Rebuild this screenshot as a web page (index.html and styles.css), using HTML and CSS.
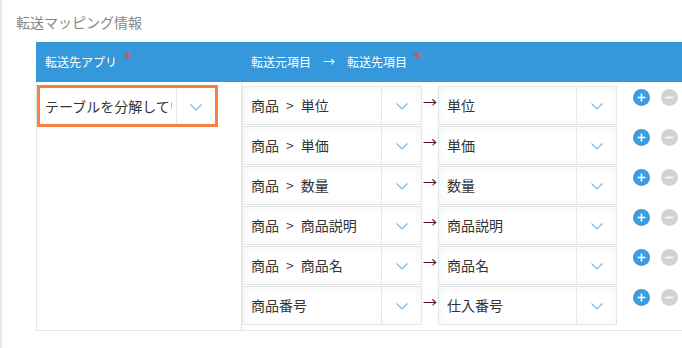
FILE: index.html
```html
<!DOCTYPE html>
<html lang="ja">
<head>
    <meta charset="UTF-8">
    <title>転送マッピング情報</title>
    <link rel="stylesheet" href="styles.css">
</head>
<body>
    <div class="page">
        <div class="title">転送マッピング情報</div>
        <div class="mapping">
            <div class="mapping-head">
                <div class="head-app">転送先アプリ<span class="req">*</span></div>
                <div class="head-fields">転送元項目<span class="head-arrow">→</span>転送先項目<span class="req">*</span></div>
            </div>
            <div class="mapping-body">
                <div class="app-cell">
                    <div class="select focused">
                        <div class="select-text">テーブルを分解してい</div>
                        <div class="select-toggle"><svg width="12" height="7" viewBox="0 0 12 7"><polyline points="0.5,0.5 6,6 11.5,0.5" fill="none" stroke="#7db6e0" stroke-width="1.2"/></svg></div>
                    </div>
                </div>
                <div class="fields-cell">
                    <div class="field-row">
                        <div class="select src"><div class="select-text">商品&ensp;&gt;&ensp;単位</div><div class="select-toggle"><svg width="12" height="7" viewBox="0 0 12 7"><polyline points="0.5,0.5 6,6 11.5,0.5" fill="none" stroke="#7db6e0" stroke-width="1.2"/></svg></div></div>
                        <div class="arrow">→</div>
                        <div class="select dst"><div class="select-text">単位</div><div class="select-toggle"><svg width="12" height="7" viewBox="0 0 12 7"><polyline points="0.5,0.5 6,6 11.5,0.5" fill="none" stroke="#7db6e0" stroke-width="1.2"/></svg></div></div>
                        <div class="btns"><svg class="btn" width="17" height="17" viewBox="0 0 17 17"><circle cx="8.5" cy="8.5" r="8.5" fill="#3d9ce0"/><path d="M4.5 8.5h8M8.5 4.5v8" stroke="#fff" stroke-width="1.6"/></svg><svg class="btn" width="17" height="17" viewBox="0 0 17 17"><circle cx="8.5" cy="8.5" r="8.5" fill="#d2d2d2"/><path d="M4.5 8.5h8" stroke="#fff" stroke-width="1.6"/></svg></div>
                    </div>
                    <div class="field-row">
                        <div class="select src"><div class="select-text">商品&ensp;&gt;&ensp;単価</div><div class="select-toggle"><svg width="12" height="7" viewBox="0 0 12 7"><polyline points="0.5,0.5 6,6 11.5,0.5" fill="none" stroke="#7db6e0" stroke-width="1.2"/></svg></div></div>
                        <div class="arrow">→</div>
                        <div class="select dst"><div class="select-text">単価</div><div class="select-toggle"><svg width="12" height="7" viewBox="0 0 12 7"><polyline points="0.5,0.5 6,6 11.5,0.5" fill="none" stroke="#7db6e0" stroke-width="1.2"/></svg></div></div>
                        <div class="btns"><svg class="btn" width="17" height="17" viewBox="0 0 17 17"><circle cx="8.5" cy="8.5" r="8.5" fill="#3d9ce0"/><path d="M4.5 8.5h8M8.5 4.5v8" stroke="#fff" stroke-width="1.6"/></svg><svg class="btn" width="17" height="17" viewBox="0 0 17 17"><circle cx="8.5" cy="8.5" r="8.5" fill="#d2d2d2"/><path d="M4.5 8.5h8" stroke="#fff" stroke-width="1.6"/></svg></div>
                    </div>
                    <div class="field-row">
                        <div class="select src"><div class="select-text">商品&ensp;&gt;&ensp;数量</div><div class="select-toggle"><svg width="12" height="7" viewBox="0 0 12 7"><polyline points="0.5,0.5 6,6 11.5,0.5" fill="none" stroke="#7db6e0" stroke-width="1.2"/></svg></div></div>
                        <div class="arrow">→</div>
                        <div class="select dst"><div class="select-text">数量</div><div class="select-toggle"><svg width="12" height="7" viewBox="0 0 12 7"><polyline points="0.5,0.5 6,6 11.5,0.5" fill="none" stroke="#7db6e0" stroke-width="1.2"/></svg></div></div>
                        <div class="btns"><svg class="btn" width="17" height="17" viewBox="0 0 17 17"><circle cx="8.5" cy="8.5" r="8.5" fill="#3d9ce0"/><path d="M4.5 8.5h8M8.5 4.5v8" stroke="#fff" stroke-width="1.6"/></svg><svg class="btn" width="17" height="17" viewBox="0 0 17 17"><circle cx="8.5" cy="8.5" r="8.5" fill="#d2d2d2"/><path d="M4.5 8.5h8" stroke="#fff" stroke-width="1.6"/></svg></div>
                    </div>
                    <div class="field-row">
                        <div class="select src"><div class="select-text">商品&ensp;&gt;&ensp;商品説明</div><div class="select-toggle"><svg width="12" height="7" viewBox="0 0 12 7"><polyline points="0.5,0.5 6,6 11.5,0.5" fill="none" stroke="#7db6e0" stroke-width="1.2"/></svg></div></div>
                        <div class="arrow">→</div>
                        <div class="select dst"><div class="select-text">商品説明</div><div class="select-toggle"><svg width="12" height="7" viewBox="0 0 12 7"><polyline points="0.5,0.5 6,6 11.5,0.5" fill="none" stroke="#7db6e0" stroke-width="1.2"/></svg></div></div>
                        <div class="btns"><svg class="btn" width="17" height="17" viewBox="0 0 17 17"><circle cx="8.5" cy="8.5" r="8.5" fill="#3d9ce0"/><path d="M4.5 8.5h8M8.5 4.5v8" stroke="#fff" stroke-width="1.6"/></svg><svg class="btn" width="17" height="17" viewBox="0 0 17 17"><circle cx="8.5" cy="8.5" r="8.5" fill="#d2d2d2"/><path d="M4.5 8.5h8" stroke="#fff" stroke-width="1.6"/></svg></div>
                    </div>
                    <div class="field-row">
                        <div class="select src"><div class="select-text">商品&ensp;&gt;&ensp;商品名</div><div class="select-toggle"><svg width="12" height="7" viewBox="0 0 12 7"><polyline points="0.5,0.5 6,6 11.5,0.5" fill="none" stroke="#7db6e0" stroke-width="1.2"/></svg></div></div>
                        <div class="arrow">→</div>
                        <div class="select dst"><div class="select-text">商品名</div><div class="select-toggle"><svg width="12" height="7" viewBox="0 0 12 7"><polyline points="0.5,0.5 6,6 11.5,0.5" fill="none" stroke="#7db6e0" stroke-width="1.2"/></svg></div></div>
                        <div class="btns"><svg class="btn" width="17" height="17" viewBox="0 0 17 17"><circle cx="8.5" cy="8.5" r="8.5" fill="#3d9ce0"/><path d="M4.5 8.5h8M8.5 4.5v8" stroke="#fff" stroke-width="1.6"/></svg><svg class="btn" width="17" height="17" viewBox="0 0 17 17"><circle cx="8.5" cy="8.5" r="8.5" fill="#d2d2d2"/><path d="M4.5 8.5h8" stroke="#fff" stroke-width="1.6"/></svg></div>
                    </div>
                    <div class="field-row">
                        <div class="select src"><div class="select-text">商品番号</div><div class="select-toggle"><svg width="12" height="7" viewBox="0 0 12 7"><polyline points="0.5,0.5 6,6 11.5,0.5" fill="none" stroke="#7db6e0" stroke-width="1.2"/></svg></div></div>
                        <div class="arrow">→</div>
                        <div class="select dst"><div class="select-text">仕入番号</div><div class="select-toggle"><svg width="12" height="7" viewBox="0 0 12 7"><polyline points="0.5,0.5 6,6 11.5,0.5" fill="none" stroke="#7db6e0" stroke-width="1.2"/></svg></div></div>
                        <div class="btns"><svg class="btn" width="17" height="17" viewBox="0 0 17 17"><circle cx="8.5" cy="8.5" r="8.5" fill="#3d9ce0"/><path d="M4.5 8.5h8M8.5 4.5v8" stroke="#fff" stroke-width="1.6"/></svg><svg class="btn" width="17" height="17" viewBox="0 0 17 17"><circle cx="8.5" cy="8.5" r="8.5" fill="#d2d2d2"/><path d="M4.5 8.5h8" stroke="#fff" stroke-width="1.6"/></svg></div>
                    </div>
                </div>
            </div>
        </div>
    </div>
</body>
</html>
```

FILE: styles.css
```css
/* Página */
body {
    margin: 0;
    background: #fff;
    font-family: "Noto Sans CJK JP", "Noto Sans", sans-serif;
    color: #333;
}

.page {
    height: 348px;
    border-left: 2px solid #e6e8e8;
    overflow: hidden;
}

/* Título */
.title {
    padding: 12px 0 0 14px;
    height: 30px;
    font-size: 14px;
    line-height: 20px;
    color: #888;
}

/* Tabla de mapeo */
.mapping {
    margin-left: 34px;
    width: 700px;
}

.mapping-head {
    display: flex;
    height: 40px;
    background: #3498db;
    color: #fff;
    font-size: 12px;
    line-height: 40px;
}

.head-app {
    width: 196px;
    padding-left: 9px;
}

.head-fields {
    padding-left: 10px;
}

.head-arrow {
    margin: 0 12px;
}

.req {
    display: inline-block;
    color: #e74c3c;
    margin-left: 6px;
    font-family: "DejaVu Sans", sans-serif;
    font-size: 18px;
    line-height: 20px;
    vertical-align: 3px;
}

.mapping-body {
    display: flex;
    border-left: 1px solid #e3e7e8;
    border-bottom: 1px solid #e3e7e8;
}

.app-cell {
    width: 204px;
    border-right: 1px solid #e3e7e8;
    padding-top: 3px;
}

.fields-cell {
    padding: 4px 0 4px 0;
}

.field-row {
    display: flex;
    align-items: flex-start;
    height: 40px;
}

/* Select */
.select {
    display: flex;
    height: 37px;
    border: 1px solid #e3e7e8;
    box-shadow: 1px 1px 12px #f5f5f5 inset;
    background: #fff;
    font-size: 14px;
    line-height: 37px;
    box-sizing: content-box;
}

.select-text {
    flex: 1;
    padding-left: 8px;
    white-space: nowrap;
    overflow: hidden;
}

.select-toggle {
    width: 39px;
    border-left: 1px solid #e3e7e8;
    display: flex;
    align-items: center;
    justify-content: center;
}

.select-toggle svg {
    margin-top: 2px;
}

.select.focused {
    width: 175px;
    height: 36px;
    line-height: 36px;
    border: 3px solid #f5813f;
    box-shadow: none;
}

.select.focused .select-text {
    padding-left: 5px;
    margin-right: 4px;
}

.select.focused .select-toggle {
    width: 38px;
}

.select.src {
    width: 178px;
}

.select.dst {
    width: 177px;
}

.arrow {
    width: 16px;
    font-size: 14px;
    line-height: 30px;
    color: #5a1010;
    text-align: center;
}

.btns {
    display: flex;
    gap: 11px;
    padding: 3px 0 0 16px;
}
```
